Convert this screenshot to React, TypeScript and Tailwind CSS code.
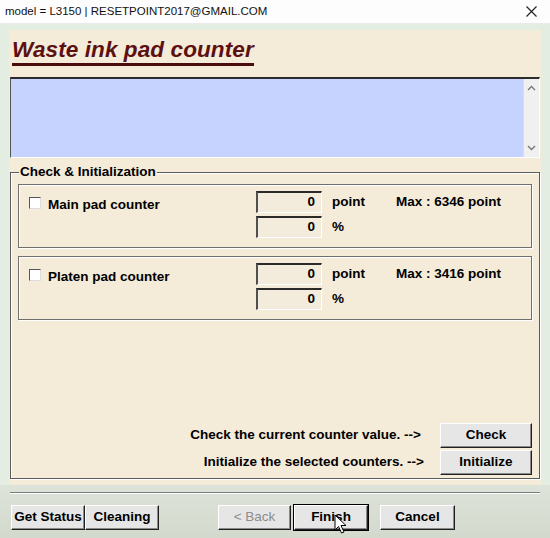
import React from "react";

const font = { fontFamily: '"Liberation Sans", Arial, sans-serif' };

function WinButton({ label, wide, def, disabled }: { label: string; wide?: string; def?: boolean; disabled?: boolean }) {
  return (
    <button
      className={
        "flex items-center justify-center h-[25px] bg-[#e6e6e6] text-[13.5px] font-bold border border-t-white border-l-white border-r-[#202020] border-b-[#202020] shadow-[inset_-1px_-1px_0_#8a8a8a] " +
        (wide ?? "w-[74px]") +
        (def ? " outline outline-1 outline-black" : "") +
        (disabled ? " text-[#8c8c8c] font-normal" : " text-black")
      }
    >
      {label}
    </button>
  );
}

function Field({ value }: { value: string }) {
  return (
    <div className="w-[66px] h-[22px] bg-[#f3ecdd] border-t-2 border-l-2 border-t-[#2a2a2a] border-l-[#505050] border-b border-r border-b-white border-r-white flex items-center justify-end pr-[6px] text-[13.5px] font-bold">
      {value}
    </div>
  );
}

function CounterBox({ label, max }: { label: string; max: string }) {
  return (
    <div className="mx-[7px] h-[64px] border border-[#6f6f6f] shadow-[inset_1px_1px_0_#ffffff,1px_1px_0_#ffffff] flex pt-[6px]">
      <div className="flex items-start w-[237px] pl-[10px] pt-[4px]">
        <div className="w-[12px] h-[12px] bg-white border border-t-[#555] border-l-[#555] border-b-[#ddd] border-r-[#ddd] mt-[2px]" />
        <span className="ml-[7px] text-[13.5px] font-bold">{label}</span>
      </div>
      <div className="flex flex-col gap-[3px]">
        <div className="flex items-center">
          <Field value="0" />
          <span className="ml-[10px] w-[64px] text-[13.5px] font-bold">point</span>
          <span className="text-[13.5px] font-bold">{max}</span>
        </div>
        <div className="flex items-center">
          <Field value="0" />
          <span className="ml-[10px] text-[13.5px] font-bold">%</span>
        </div>
      </div>
    </div>
  );
}

export default function App() {
  return (
    <div className="w-[550px] h-[538px] overflow-hidden flex flex-col bg-[#e3ede1] text-black relative" style={font}>
      {/* title bar */}
      <div className="h-[24px] bg-[#fdfdfd] flex items-center justify-between pl-[5px] pr-[13px] border-b border-[#eaeaea]">
        <span className="text-[11.5px] text-[#111]">model = L3150 | RESETPOINT2017@GMAIL.COM</span>
        <svg width="11" height="11" viewBox="0 0 11 11">
          <path d="M0.5 0.5 L10.5 10.5 M10.5 0.5 L0.5 10.5" stroke="#222" strokeWidth="1.2" />
        </svg>
      </div>

      {/* main panel */}
      <div className="mx-[9px] mt-[6px] h-[455px] bg-[#f4ebd9] flex flex-col">
        <div className="pl-[3px] pt-[7px] h-[47px]">
          <div className="inline-block border-b-[3px] border-[#4a0d0d] leading-[26px] text-[22.5px] font-bold italic text-[#5c1010] tracking-[0.1px]">
            Waste ink pad counter
          </div>
        </div>

        {/* blue text area */}
        <div className="mx-[1px] h-[81px] bg-[#c6d3fe] border-t-2 border-l border-t-[#2c2c2c] border-l-[#555] border-r border-b border-r-white border-b-white flex justify-end">
          <div className="w-[16px] bg-[#f0f0f0] border-l border-[#dcdcdc] flex flex-col justify-between items-center py-[6px]">
            <svg width="9" height="6" viewBox="0 0 9 6">
              <path d="M1 5 L4.5 1.5 L8 5" stroke="#777" strokeWidth="1.4" fill="none" />
            </svg>
            <svg width="9" height="6" viewBox="0 0 9 6">
              <path d="M1 1 L4.5 4.5 L8 1" stroke="#777" strokeWidth="1.4" fill="none" />
            </svg>
          </div>
        </div>

        {/* group box */}
        <div className="relative mt-[14px] mx-[1px] h-[307px] border border-[#5a5a5a] shadow-[inset_1px_1px_0_#ffffff,1px_1px_0_#ffffff] flex flex-col pt-[11px]">
          <span className="absolute left-[8px] -top-[9px] bg-[#f4ebd9] px-[1px] text-[13.5px] font-bold leading-[16px]">
            Check &amp; Initialization
          </span>
          <CounterBox label="Main pad counter" max="Max : 6346 point" />
          <div className="h-[8px]" />
          <CounterBox label="Platen pad counter" max="Max : 3416 point" />

          <div className="mt-auto mb-[3px] flex flex-col gap-[2px] pr-[7px]">
            <div className="flex items-center justify-end">
              <span className="text-[13.5px] font-bold mr-[19px]">Check the current counter value. --&gt;</span>
              <WinButton label="Check" wide="w-[92px]" />
            </div>
            <div className="flex items-center justify-end">
              <span className="text-[13.5px] font-bold mr-[16px]">Initialize the selected counters. --&gt;</span>
              <WinButton label="Initialize" wide="w-[92px]" />
            </div>
          </div>
        </div>
      </div>

      {/* bottom */}
      <div className="flex-1 bg-[linear-gradient(#dde3d8,#d3d9cd)] flex flex-col">
        <div className="mx-[10px] mt-[7px] h-[2px] border-t border-[#7c7c7c] border-b border-b-white" />
        <div className="flex items-center mt-[11px] pl-[11px]">
          <WinButton label="Get Status" wide="w-[74px]" />
          <WinButton label="Cleaning" wide="w-[74px]" />
          <div className="w-[59px]" />
          <WinButton label="< Back" wide="w-[73px]" disabled />
          <div className="w-[3px]" />
          <WinButton label="Finish" wide="w-[74px]" def />
          <div className="w-[12px]" />
          <WinButton label="Cancel" wide="w-[75px]" />
        </div>
      </div>

      {/* mouse pointer */}
      <svg className="absolute left-[334px] top-[514px]" width="14" height="21" viewBox="0 0 14 21">
        <path d="M1 1 L1 16 L4.5 12.5 L7.5 19 L10 18 L7 11.5 L12 11.5 Z" fill="#fff" stroke="#000" strokeWidth="1" />
      </svg>
    </div>
  );
}
